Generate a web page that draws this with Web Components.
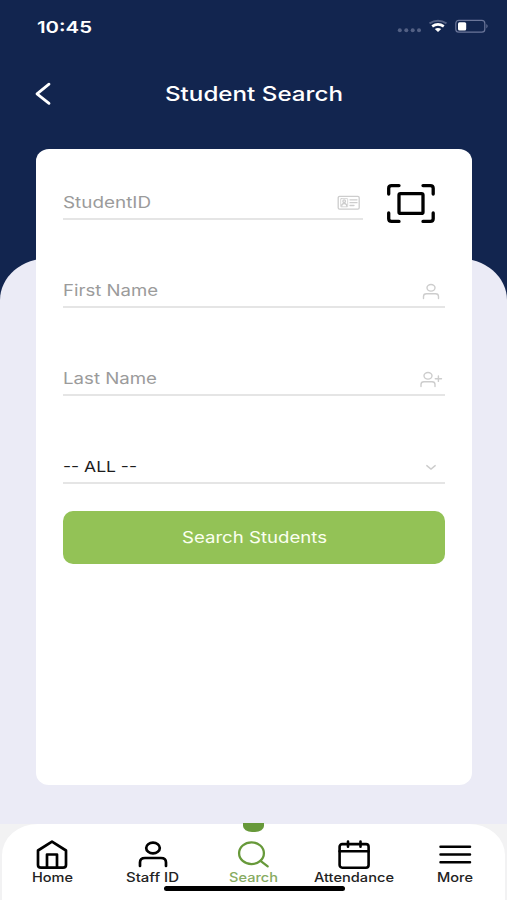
<!DOCTYPE html>
<html lang="en">
<head>
<meta charset="UTF-8">
<meta name="viewport" content="width=device-width, initial-scale=1.0">
<title>Student Search</title>
<style>
    :root {
        --navy: #12254f;
        --lavender: #ebebf6;
        --green: #93c256;
        --dark_green: #67993a;
        --line: #e5e5e5;
        --placeholder: #9b9b9b;
        --icon: #cdcdcd;
    }

    body {
        margin: 0;
        font-family: Inter, "Liberation Sans", sans-serif;
        overflow: hidden;
    }
</style>
</head>
<body>
<student-search-page></student-search-page>

<script>
const icons = {
    back: /*html*/`<svg width="18" height="24" viewBox="0 0 18 24"><path d="M15 2.2 3 11.9 15 21.3" stroke-width="2.8"/></svg>`,
    card: /*html*/`<svg width="24" height="16" viewBox="0 0 24 16" stroke-width="1.3">
        <rect x="1.2" y="1.4" width="21" height="12.8" rx="1.4"/>
        <rect x="3.7" y="3.6" width="7" height="8.2" rx=".5" stroke-width=".8"/>
        <circle cx="7.2" cy="6.2" r="1.3"/><path d="M4.8 11V9.7Q7.2 7.4 9.6 9.7V11M13 4.8h7M13 7.7h7M13 10.5h4"/></svg>`,
    user: /*html*/`<svg width="18" height="17" viewBox="0 0 18 17" stroke-width="1.4">
        <ellipse cx="9" cy="4.8" rx="4" ry="3.3"/><path d="M1.5 15.6V13.5Q1.5 10.8 4.5 10.8h9Q16.5 10.8 16.5 13.5v2.1"/></svg>`,
    useradd: /*html*/`<svg width="24" height="17" viewBox="0 0 24 17" stroke-width="1.4">
        <ellipse cx="9" cy="4.8" rx="4" ry="3.3"/><path d="M2 15.6V13.5Q2 10.8 5 10.8h8Q16 10.8 16 13.5v2.1M16.3 7.7h6.2M19.4 5v5.4"/></svg>`,
    down: /*html*/`<svg width="12" height="7" viewBox="0 0 12 7"><path d="M1.8 1.6 6 5.1 10.2 1.6" stroke-width="1.4"/></svg>`,
    scan: /*html*/`<svg width="50" height="42" viewBox="0 0 50 42" stroke-width="3.3">
        <path d="M2.7 11V5.2Q2.7 2.6 5.6 2.6H13M37 2.6h7.2Q47.2 2.6 47.2 5.2V11M2.7 30v5.8Q2.7 38.4 5.6 38.4H13M37 38.4h7.2Q47.2 38.4 47.2 35.8V30"/>
        <rect x="13" y="10.6" width="24" height="19.8" rx="1.5"/></svg>`,
    home: /*html*/`<svg width="34" height="32" viewBox="0 0 34 32" stroke-width="2.7">
        <path d="M17 2.7 31 11.5V26Q31 28.6 28 28.6H6Q3 28.6 3 26V11.5ZM12 28.5V15.5H22V28.5"/></svg>`,
    staff: /*html*/`<svg width="34" height="32" viewBox="0 0 34 32" stroke-width="2.7">
        <ellipse cx="17" cy="9" rx="6.8" ry="5.3"/><path d="M4 27V23.4Q4 19 9 19H25Q30 19 30 23.4V27"/></svg>`,
    search: /*html*/`<svg width="34" height="32" viewBox="0 0 34 32" stroke-width="2.3">
        <ellipse cx="15.5" cy="14.2" rx="12.4" ry="10.9"/><path d="m24.5 21.9 7.2 5.4"/></svg>`,
    calendar: /*html*/`<svg width="34" height="32" viewBox="0 0 34 32" stroke-width="2.6">
        <rect x="2.6" y="5.1" width="29" height="23.6" rx="2.6"/><path d="M2.6 12.3h29M11 2.6v5.2M23.5 2.6v5.2"/></svg>`,
    menu: /*html*/`<svg width="34" height="32" viewBox="0 0 34 32" stroke-width="2.5"><path d="M2.5 7.7h29.5M2.5 15.4h29.5M2.5 23.2h29.5"/></svg>`
};

class AppIcon extends HTMLElement {
    constructor() {
        super();
        this.attachShadow({ mode: 'open' });
    }

    connectedCallback() {
        this.shadowRoot.innerHTML = /*html*/`
        <style>
            :host { display: block; flex: none; }
            svg { display: block; fill: none; stroke: currentColor; stroke-linecap: round; stroke-linejoin: round; }
        </style>
        ${icons[this.getAttribute('name')]}`;
    }
}
customElements.define('app-icon', AppIcon);

// One line of extended text, widened to fill the width it is given
class WideText extends HTMLElement {
    constructor() {
        super();
        this.attachShadow({ mode: 'open' });
    }

    connectedCallback() {
        const width = Number(this.getAttribute('width'));
        this.shadowRoot.innerHTML = /*html*/`
        <style>
            :host { display: block; flex: none; width: ${width}px; white-space: nowrap; line-height: 20px; text-align: left; }
            span { display: inline-block; transform-origin: left; }
        </style>
        <span>${this.getAttribute('text')}</span>`;
        const span = this.shadowRoot.querySelector('span');
        span.style.transform = `scaleX(${width / span.getBoundingClientRect().width})`;
    }
}
customElements.define('wide-text', WideText);

class StatusBar extends HTMLElement {
    constructor() {
        super();
        this.attachShadow({ mode: 'open' });
    }

    connectedCallback() {
        this.shadowRoot.innerHTML = /*html*/`
        <style>
            :host { display: flex; justify-content: space-between; align-items: center; height: 20px; padding: 17px 18px 0 36.5px; }
            wide-text { font-size: 16.5px; font-weight: 600; }
            svg { display: block; }
        </style>
        <wide-text text="10:45" width="55"></wide-text>
        <svg width="92" height="16" viewBox="0 0 92 16" fill="none">
            <g fill="#536084"><circle cx="2.8" cy="11.2" r="2"/><circle cx="9.3" cy="11.2" r="2"/><circle cx="15.7" cy="11.2" r="2"/><circle cx="22" cy="11.2" r="2"/></g>
            <path d="M32.5 4.3Q41-.9 49.5 4.3" stroke="#536084" stroke-width="2"/>
            <path d="M35.2 7.4Q41 3.2 46.8 7.4" stroke="#fff" stroke-width="2.6"/>
            <path d="M37.8 10Q41 7.9 44.2 10L41 13Z" fill="#fff"/>
            <rect x="58.8" y="1.4" width="29" height="11.8" rx="3" stroke="#6b769a" stroke-width="1.2"/>
            <rect x="61" y="3.2" width="8.2" height="8.2" rx="1.5" fill="#fff"/>
            <path d="M89.4 5Q91.8 7.2 89.4 9.4Z" fill="#6b769a"/>
        </svg>`;
    }
}
customElements.define('status-bar', StatusBar);

class PageHeader extends HTMLElement {
    constructor() {
        super();
        this.attachShadow({ mode: 'open' });
    }

    connectedCallback() {
        this.shadowRoot.innerHTML = /*html*/`
        <style>
            :host { display: block; height: 258px; color: #fff; }
            .bar { display: grid; grid-template-columns: 1fr auto 1fr; align-items: center; height: 24px; margin-top: 45px; padding: 0 34px; }
            wide-text { font-size: 20.3px; font-weight: 500; }
        </style>
        <status-bar></status-bar>
        <div class="bar">
            <app-icon name="back"></app-icon>
            <wide-text text="${this.getAttribute('heading')}" width="178"></wide-text>
        </div>`;
    }
}
customElements.define('page-header', PageHeader);

class FormField extends HTMLElement {
    constructor() {
        super();
        this.attachShadow({ mode: 'open' });
    }

    connectedCallback() {
        this.shadowRoot.innerHTML = /*html*/`
        <style>
            :host { display: block; color: var(--placeholder); font-size: 15.4px; }
            .line { display: flex; justify-content: space-between; align-items: center; box-sizing: border-box; height: 36px; padding-top: 4px; border-bottom: 2px solid var(--line); }
            app-icon { color: var(--icon); margin-right: var(--icon_gap, 5px); }
        </style>
        <div class="line">
            <wide-text text="${this.getAttribute('label')}" width="${this.getAttribute('width')}"></wide-text>
            <app-icon name="${this.getAttribute('icon')}"></app-icon>
        </div>`;
    }
}
customElements.define('form-field', FormField);

class SearchCard extends HTMLElement {
    constructor() {
        super();
        this.attachShadow({ mode: 'open' });
    }

    connectedCallback() {
        this.shadowRoot.innerHTML = /*html*/`
        <style>
            :host { display: block; box-sizing: border-box; height: 636px; padding: 35px 27px 0; border-radius: 13px / 12px; background: #fff; }
            .fields { display: flex; flex-direction: column; gap: 52px; }
            .row { display: flex; gap: 23px; height: 36px; }
            .row form-field { flex: 1; --icon_gap: 2px; }
            .row app-icon { margin-top: -1px; margin-right: 9px; }
            .useradd { --icon_gap: 2px; }
            .all { color: #1c1c1c; font-size: 14.4px; --icon_gap: 8px; }
            button { display: flex; align-items: center; justify-content: center; width: 382px; height: 53px; margin-top: 27px; padding: 0; border: none; border-radius: 10px; background: var(--green); color: #fbfff0; font: inherit; font-size: 15.4px; }
        </style>
        <div class="fields">
            <div class="row">
                <form-field label="StudentID" width="88" icon="card"></form-field>
                <app-icon name="scan"></app-icon>
            </div>
            <form-field label="First Name" width="95" icon="user"></form-field>
            <form-field class="useradd" label="Last Name" width="94" icon="useradd"></form-field>
            <form-field class="all" label="-- ALL --" width="74" icon="down"></form-field>
        </div>
        <button><wide-text text="Search Students" width="145"></wide-text></button>`;
    }
}
customElements.define('search-card', SearchCard);

class TabItem extends HTMLElement {
    constructor() {
        super();
        this.attachShadow({ mode: 'open' });
    }

    connectedCallback() {
        this.shadowRoot.innerHTML = /*html*/`
        <style>
            :host { display: flex; flex-direction: column; align-items: center; flex: 1; padding-top: 15px; color: #000; }
            :host([active]) { color: var(--dark_green); }
            wide-text { margin-top: -3px; font-size: 12.6px; font-weight: 500; color: #222; }
            :host([active]) wide-text { color: #87ab62; }
        </style>
        <app-icon name="${this.getAttribute('icon')}"></app-icon>
        <wide-text text="${this.getAttribute('label')}" width="${this.getAttribute('width')}"></wide-text>`;
    }
}
customElements.define('tab-item', TabItem);

class TabBar extends HTMLElement {
    constructor() {
        super();
        this.attachShadow({ mode: 'open' });
    }

    connectedCallback() {
        this.shadowRoot.innerHTML = /*html*/`
        <style>
            :host { display: block; position: relative; height: 76px; background: #f2f2f3; }
            .tabs { display: flex; box-sizing: border-box; height: 76px; margin: 0 2px; border-radius: 36px 36px 0 0 / 31px 31px 0 0; background: #fff; }
            .marker { position: absolute; left: 243px; top: -1px; width: 21px; height: 9px; border-radius: 0 0 9px 9px / 0 0 6px 6px; background: var(--dark_green); }
            .home { position: absolute; left: 164px; top: 62px; width: 181px; height: 5px; border-radius: 3px; background: #000; }
        </style>
        <div class="tabs"><slot></slot></div>
        <div class="marker"></div>
        <div class="home"></div>`;
    }
}
customElements.define('tab-bar', TabBar);

class StudentSearchPage extends HTMLElement {
    constructor() {
        super();
        this.attachShadow({ mode: 'open' });
    }

    connectedCallback() {
        this.shadowRoot.innerHTML = /*html*/`
        <style>
            :host { display: block; width: 507px; height: 900px; background: var(--navy); }
            .sheet { display: flow-root; height: 566px; border-radius: 49px 49px 0 0 / 42px 42px 0 0; background: var(--lavender); }
            search-card { margin: -109px 35.5px 0 36px; }
        </style>
        <page-header heading="Student Search"></page-header>
        <div class="sheet"><search-card></search-card></div>
        <tab-bar>
            <tab-item icon="home" label="Home" width="41"></tab-item>
            <tab-item icon="staff" label="Staff ID" width="53"></tab-item>
            <tab-item icon="search" label="Search" width="49"  active></tab-item>
            <tab-item icon="calendar" label="Attendance" width="80"></tab-item>
            <tab-item icon="menu" label="More" width="36"></tab-item>
        </tab-bar>`;
    }
}
customElements.define('student-search-page', StudentSearchPage);
</script>
</body>
</html>
